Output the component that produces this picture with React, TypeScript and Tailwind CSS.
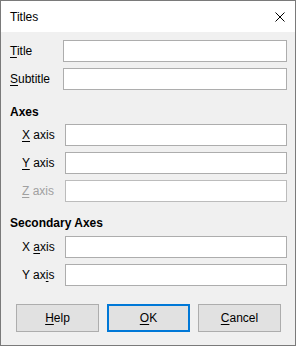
import React from "react";

type Row = {
    label: React.ReactNode
    disabled?: boolean
}

function U({ children }: { children: React.ReactNode }) {
    return <span className="underline underline-offset-2">{children}</span>
}

function Field({ label, disabled, indent }: Row & { indent?: boolean }) {
    return (
        <div className={`flex items-center h-[22px] ${indent ? "pl-[21px]" : "pl-[9px]"}`}>
            <div className={`${indent ? "w-[43px]" : "w-[53px]"} ${disabled ? "text-[#a0a0a0]" : "text-black"}`}>
                {label}
            </div>
            <div className={`h-[22px] bg-white border ${disabled ? "border-[#bcbcbc]" : "border-[#adadad]"} ${indent ? "w-[222px]" : "w-[224px]"}`} />
        </div>
    )
}

export default function App() {
    return (
        <div className="w-[297px] h-[348px] bg-white" style={{ fontFamily: '"Liberation Sans", Arial, sans-serif' }}>
            <div className="w-[296px] h-[346px] border border-[#7a7a7a] bg-[#f0f0f0] flex flex-col text-[12px] leading-none">
                {/* title bar */}
                <div className="h-[31px] bg-white flex items-center justify-between pl-[9px] pr-[10px]">
                    <span className="text-black">Titles</span>
                    <svg width="10" height="10" viewBox="0 0 10 10" className="mt-[1px]">
                        <path d="M0.5 0.5 L9.5 9.5 M9.5 0.5 L0.5 9.5" stroke="#000" strokeWidth="1" />
                    </svg>
                </div>

                <div className="flex flex-col pt-[8px]">
                    <div className="flex flex-col gap-[6px]">
                        <Field label={<><U>T</U>itle</>} />
                        <Field label={<><U>S</U>ubtitle</>} />
                    </div>

                    <div className="font-bold pl-[9px] mt-[16px] h-[12px]">Axes</div>
                    <div className="flex flex-col gap-[6px] mt-[6px]">
                        <Field indent label={<><U>X</U> axis</>} />
                        <Field indent label={<><U>Y</U> axis</>} />
                        <Field indent disabled label={<><U>Z</U> axis</>} />
                    </div>

                    <div className="font-bold pl-[9px] mt-[15px] h-[12px]">Secondary Axes</div>
                    <div className="flex flex-col gap-[6px] mt-[7px]">
                        <Field indent label={<>X <U>a</U>xis</>} />
                        <Field indent label={<>Y ax<U>i</U>s</>} />
                    </div>

                    {/* buttons */}
                    <div className="flex gap-[8px] pl-[15px] mt-[18px]">
                        <button className="w-[83px] h-[28px] bg-[#e1e1e1] border border-[#adadad] text-black">
                            <U>H</U>elp
                        </button>
                        <button className="w-[83px] h-[28px] bg-[#e1e1e1] border-2 border-[#0078d7] text-black">
                            <U>O</U>K
                        </button>
                        <button className="w-[83px] h-[28px] bg-[#e1e1e1] border border-[#adadad] text-black">
                            <U>C</U>ancel
                        </button>
                    </div>
                </div>
            </div>
        </div>
    );
}
